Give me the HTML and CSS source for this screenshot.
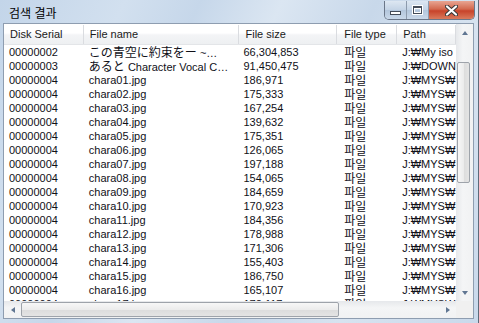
FILE: index.html
```html
<!DOCTYPE html>
<html lang="ko">
<head>
<meta charset="UTF-8">
<title>검색 결과</title>
<link rel="stylesheet" href="styles.css">
</head>
<body>
<div class="window">
    <div class="titlebar">
        <span class="title">검색 결과</span>
        <div class="caption-buttons">
            <div class="cap-btn min"><span class="glyph-min"></span></div>
            <div class="cap-btn max"><span class="glyph-max"></span></div>
            <div class="cap-btn close">
                <svg width="13" height="11" viewBox="0 0 13 11">
                    <path d="M2 1.5 L11 9.5 M11 1.5 L2 9.5" stroke="#3a3a3a" stroke-width="4.2" stroke-linecap="round"/>
                    <path d="M2 1.5 L11 9.5 M11 1.5 L2 9.5" stroke="#ffffff" stroke-width="2.2" stroke-linecap="round"/>
                </svg>
            </div>
        </div>
    </div>
    <div class="list">
        <div class="list-main">
            <div class="list-view">
                <div class="row header">
                    <div class="cell c1">Disk Serial</div>
                    <div class="cell c2">File name</div>
                    <div class="cell c3">File size</div>
                    <div class="cell c4">File type</div>
                    <div class="cell c5">Path</div>
                </div>
                <div class="rows">
                    <div class="row"><div class="cell c1">00000002</div><div class="cell c2"><span class="cjk">この青空に約束をー</span> ~…</div><div class="cell c3">66,304,853</div><div class="cell c4 kr">파일</div><div class="cell c5">J:₩My iso</div></div>
                    <div class="row"><div class="cell c1">00000003</div><div class="cell c2"><span class="cjk">あると</span> Character Vocal C…</div><div class="cell c3">91,450,475</div><div class="cell c4 kr">파일</div><div class="cell c5">J:₩DOWNLOAD</div></div>
                    <div class="row"><div class="cell c1">00000004</div><div class="cell c2">chara01.jpg</div><div class="cell c3">186,971</div><div class="cell c4 kr">파일</div><div class="cell c5">J:₩MYS₩</div></div>
                    <div class="row"><div class="cell c1">00000004</div><div class="cell c2">chara02.jpg</div><div class="cell c3">175,333</div><div class="cell c4 kr">파일</div><div class="cell c5">J:₩MYS₩</div></div>
                    <div class="row"><div class="cell c1">00000004</div><div class="cell c2">chara03.jpg</div><div class="cell c3">167,254</div><div class="cell c4 kr">파일</div><div class="cell c5">J:₩MYS₩</div></div>
                    <div class="row"><div class="cell c1">00000004</div><div class="cell c2">chara04.jpg</div><div class="cell c3">139,632</div><div class="cell c4 kr">파일</div><div class="cell c5">J:₩MYS₩</div></div>
                    <div class="row"><div class="cell c1">00000004</div><div class="cell c2">chara05.jpg</div><div class="cell c3">175,351</div><div class="cell c4 kr">파일</div><div class="cell c5">J:₩MYS₩</div></div>
                    <div class="row"><div class="cell c1">00000004</div><div class="cell c2">chara06.jpg</div><div class="cell c3">126,065</div><div class="cell c4 kr">파일</div><div class="cell c5">J:₩MYS₩</div></div>
                    <div class="row"><div class="cell c1">00000004</div><div class="cell c2">chara07.jpg</div><div class="cell c3">197,188</div><div class="cell c4 kr">파일</div><div class="cell c5">J:₩MYS₩</div></div>
                    <div class="row"><div class="cell c1">00000004</div><div class="cell c2">chara08.jpg</div><div class="cell c3">154,065</div><div class="cell c4 kr">파일</div><div class="cell c5">J:₩MYS₩</div></div>
                    <div class="row"><div class="cell c1">00000004</div><div class="cell c2">chara09.jpg</div><div class="cell c3">184,659</div><div class="cell c4 kr">파일</div><div class="cell c5">J:₩MYS₩</div></div>
                    <div class="row"><div class="cell c1">00000004</div><div class="cell c2">chara10.jpg</div><div class="cell c3">170,923</div><div class="cell c4 kr">파일</div><div class="cell c5">J:₩MYS₩</div></div>
                    <div class="row"><div class="cell c1">00000004</div><div class="cell c2">chara11.jpg</div><div class="cell c3">184,356</div><div class="cell c4 kr">파일</div><div class="cell c5">J:₩MYS₩</div></div>
                    <div class="row"><div class="cell c1">00000004</div><div class="cell c2">chara12.jpg</div><div class="cell c3">178,988</div><div class="cell c4 kr">파일</div><div class="cell c5">J:₩MYS₩</div></div>
                    <div class="row"><div class="cell c1">00000004</div><div class="cell c2">chara13.jpg</div><div class="cell c3">171,306</div><div class="cell c4 kr">파일</div><div class="cell c5">J:₩MYS₩</div></div>
                    <div class="row"><div class="cell c1">00000004</div><div class="cell c2">chara14.jpg</div><div class="cell c3">155,403</div><div class="cell c4 kr">파일</div><div class="cell c5">J:₩MYS₩</div></div>
                    <div class="row"><div class="cell c1">00000004</div><div class="cell c2">chara15.jpg</div><div class="cell c3">186,750</div><div class="cell c4 kr">파일</div><div class="cell c5">J:₩MYS₩</div></div>
                    <div class="row"><div class="cell c1">00000004</div><div class="cell c2">chara16.jpg</div><div class="cell c3">165,107</div><div class="cell c4 kr">파일</div><div class="cell c5">J:₩MYS₩</div></div>
                    <div class="row"><div class="cell c1">00000004</div><div class="cell c2">chara17.jpg</div><div class="cell c3">172,117</div><div class="cell c4 kr">파일</div><div class="cell c5">J:₩MYS₩</div></div>
                </div>
            </div>
            <div class="vscroll">
                <div class="arrow up"><span class="tri-up"></span></div>
                <div class="vtrack">
                    <div class="vthumb"></div>
                </div>
                <div class="arrow down"><span class="tri-down"></span></div>
            </div>
        </div>
        <div class="hscroll-row">
            <div class="hscroll">
                <div class="arrow left"><span class="tri-left"></span></div>
                <div class="htrack">
                    <div class="hthumb"></div>
                </div>
                <div class="arrow right"><span class="tri-right"></span></div>
            </div>
            <div class="corner"></div>
        </div>
    </div>
</div>
</body>
</html>
```

FILE: styles.css
```css
body {
    margin: 0;
    padding: 0;
    font-family: "Liberation Sans", Arial, sans-serif;
    font-size: 11px;
}
.window {
    width: 479px;
    height: 323px;
    box-sizing: border-box;
    padding: 0 4px 4px 3px;
    background: linear-gradient(115deg, #c3d5e9 0%, #d2e0ef 20%, #c6d7ea 32%, #dbe6f2 45%, #c8d8ea 60%, #d7e3f0 78%, #c9d9eb 100%);
    border-right: 1px solid #5d6b7a;
    display: flex;
    flex-direction: column;
}
.titlebar {
    height: 23px;
    flex-shrink: 0;
    display: flex;
    align-items: flex-start;
    justify-content: space-between;
}
.title {
    font-family: "Noto Sans CJK KR", sans-serif;
    font-size: 12px;
    color: #000;
    padding: 5px 0 0 6px;
    line-height: 15px;
}
.caption-buttons {
    display: flex;
    margin-top: 1px;
    height: 18px;
    border: 1px solid #6a7688;
    border-top: none;
    border-radius: 0 0 5px 5px;
    overflow: hidden;
    margin-right: -1px;
}
.cap-btn {
    height: 18px;
    display: flex;
    align-items: center;
    justify-content: center;
    box-sizing: border-box;
}
.cap-btn.min, .cap-btn.max {
    width: 22px;
    background: linear-gradient(#dde7f2, #c3d3e5 50%, #b3c6dc 51%, #c9d8e9);
    border-right: 1px solid #8c9aac;
}
.cap-btn.close {
    width: 45px;
    background: linear-gradient(#e8a592, #d3694f 45%, #c7432a 55%, #d97a5c);
}
.glyph-min {
    width: 9px;
    height: 2px;
    border: 1px solid #444c58;
    background: #fff;
    margin-top: 6px;
}
.glyph-max {
    width: 7px;
    height: 5px;
    border: 1px solid #444c58;
    border-top-width: 2px;
    background: transparent;
    box-shadow: inset 0 0 0 1px #fff, 0 0 0 1px #fff;
}
.list {
    flex: 1;
    min-height: 0;
    border: 1px solid #8e9db0;
    background: #fff;
    display: flex;
    flex-direction: column;
}
.list-main {
    flex: 1;
    display: flex;
    min-height: 0;
}
.list-view {
    width: 453px;
    overflow: hidden;
    display: flex;
    flex-direction: column;
}
.rows {
    flex: 1;
    min-height: 0;
    overflow: hidden;
}
.row {
    display: flex;
    flex-shrink: 0;
    height: 14px;
    line-height: 14px;
    color: #101018;
}
.cell {
    box-sizing: border-box;
    white-space: nowrap;
    overflow: hidden;
    padding-left: 5px;
}
.c1 { width: 80px; }
.c2 { width: 156px; }
.c3 { width: 98px; padding-left: 4px; }
.c4 { width: 60px; padding-left: 7px; }
.c5 { width: 59px; }
.cjk {
    font-family: "Noto Sans CJK JP", sans-serif;
    font-size: 12px;
    line-height: 14px;
}
.kr {
    font-family: "Noto Sans CJK KR", sans-serif;
    font-size: 12px;
    line-height: 14px;
}
.row.header {
    height: 19px;
    line-height: 19px;
    padding-top: 1px;
    background: linear-gradient(#ffffff, #ffffff 45%, #f3f4f6 55%, #eef0f2);
    border-bottom: 1px solid #e3e5e8;
    color: #1a1a1a;
}
.header .cell {
    padding-left: 6px;
    border-right: 1px solid #dadce0;
}
.header .c3 { padding-left: 6px; }
.header .c4 { padding-left: 7px; }
.vscroll {
    width: 17px;
    display: flex;
    flex-direction: column;
    background: linear-gradient(to right, #e6e8eb, #f4f5f6 40%, #f1f2f3);
}
.arrow {
    height: 17px;
    flex-shrink: 0;
    display: flex;
    align-items: center;
    justify-content: center;
}
.vtrack {
    flex: 1;
    padding-top: 21px;
}
.vthumb {
    width: 13px;
    margin-left: 1px;
    height: 121px;
    box-sizing: border-box;
    border: 1px solid #9ea3aa;
    border-radius: 2px;
    background: linear-gradient(to right, #f7f7f7, #ececec 50%, #dcdcdc 51%, #e4e4e4);
}
.tri-up, .tri-down, .tri-left, .tri-right {
    width: 0;
    height: 0;
    border: 3px solid transparent;
}
.tri-up { border-bottom: 4px solid #607692; margin-bottom: 3px; }
.tri-down { border-top: 4px solid #607692; margin-top: 3px; }
.tri-left { border-right: 4px solid #607692; margin-right: 3px; }
.tri-right { border-left: 4px solid #607692; margin-left: 3px; }
.hscroll-row {
    height: 17px;
    flex-shrink: 0;
    display: flex;
}
.hscroll {
    width: 453px;
    display: flex;
    background: linear-gradient(#e6e8eb, #f4f5f6 40%, #f1f2f3);
}
.hscroll .arrow {
    width: 17px;
}
.htrack {
    flex: 1;
    padding-top: 1px;
}
.hthumb {
    width: 318px;
    height: 15px;
    box-sizing: border-box;
    border: 1px solid #9ea3aa;
    border-radius: 2px;
    background: linear-gradient(#f7f7f7, #ececec 50%, #dcdcdc 51%, #e4e4e4);
}
.corner {
    width: 17px;
    background: #f0f0f0;
}
```
